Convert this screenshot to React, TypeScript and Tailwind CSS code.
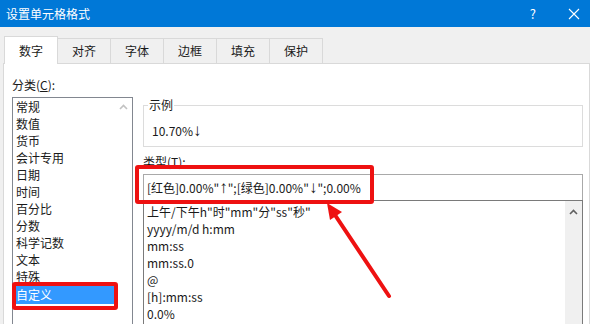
import React from 'react';

const categories = [
  '常规',
  '数值',
  '货币',
  '会计专用',
  '日期',
  '时间',
  '百分比',
  '分数',
  '科学记数',
  '文本',
  '特殊',
  '自定义',
];

const formats = [
  '上午/下午h"时"mm"分"ss"秒"',
  'yyyy/m/d h:mm',
  'mm:ss',
  'mm:ss.0',
  '@',
  '[h]:mm:ss',
  '0.0%',
];

const tabs = ['数字', '对齐', '字体', '边框', '填充', '保护'];

const ChevronUp: React.FC<{className?: string}> = ({className}) => (
  <svg width="9" height="6" viewBox="0 0 9 6" className={className}>
    <path d="M1 5 L4.5 1.5 L8 5" fill="none" stroke="currentColor" strokeWidth="1.6" />
  </svg>
);

// narrow arrow glyph, the CJK font's own arrows are full width
const Arrow: React.FC<{ch: string}> = ({ch}) => (
  <span
    style={{fontFamily: '"Liberation Sans", "DejaVu Sans", sans-serif'}}
    className="text-[17px] leading-[0] inline-block"
  >
    {ch}
  </span>
);

export default function App() {
  return (
    <div
      className="relative w-[590px] h-[324px] overflow-hidden bg-[#f0f0f0] text-[12px] text-[#1a1a1a]"
      style={{fontFamily: '"Noto Sans CJK SC", "Noto Sans", sans-serif'}}
    >
      {/* title bar */}
      <div className="h-[27px] bg-[#0078d7] flex items-center text-white">
        <span className="pl-[6px] text-[12px] leading-none">设置单元格格式</span>
        <span className="ml-auto mr-[32px] text-[13px] leading-none">?</span>
        <svg width="12" height="12" viewBox="0 0 12 12" className="mr-[10px]">
          <path d="M1 1 L11 11 M11 1 L1 11" stroke="white" strokeWidth="1.1" />
        </svg>
      </div>

      <div className="pt-[9px] pl-[3px]">
        {/* tabs */}
        <div className="flex items-end h-[27px] pl-[1px]">
          {tabs.map((t, i) =>
            i === 0 ? (
              <div
                key={t}
                className="relative z-10 h-[28px] -mb-px w-[54px] flex items-center justify-center bg-white border border-b-0 border-[#d9d9d9]"
              >
                {t}
              </div>
            ) : (
              <div
                key={t}
                className="h-[25px] w-[54px] -ml-px flex items-center justify-center bg-[#f0f0f0] border border-b-0 border-[#d9d9d9]"
              >
                {t}
              </div>
            ),
          )}
        </div>

        {/* panel */}
        <div className="w-[587px] h-[300px] bg-white border border-[#d9d9d9] pl-[8px] pr-[6px] pt-[13px] flex gap-[10px]">
          {/* category column */}
          <div className="w-[121px] flex flex-col">
            <div className="leading-[16px]">
              分类(<span className="underline">C</span>):
            </div>
            <div className="mt-[4px] h-[240px] border border-[#828790] flex">
              <div className="flex-1 pl-[2px]">
                {categories.map((c) => (
                  <div
                    key={c}
                    className={
                      c === '自定义'
                        ? 'h-[18px] leading-[18px] pl-[1px] mt-[1px] bg-[#3399ff] text-white'
                        : 'h-[17px] leading-[17px] pl-[1px]'
                    }
                  >
                    {c}
                  </div>
                ))}
              </div>
              <div className="w-[17px] flex justify-center pt-[6px]">
                <ChevronUp className="text-[#c2c2c2]" />
              </div>
            </div>
          </div>

          {/* right column */}
          <div className="flex-1 flex flex-col mt-[28px]">
            <div className="relative h-[42px] border border-[#dcdcdc] pl-[8px] pt-[17px]">
              <span className="absolute -top-[9px] left-[4px] bg-white px-[1px] leading-[16px]">示例</span>
              <div className="leading-[16px]">
                10.70%<Arrow ch="↓" />
              </div>
            </div>

            <div className="mt-[7px] leading-[16px]">
              类型(<span className="underline">T</span>):
            </div>

            <div className="mt-[4px] h-[26px] border border-b-0 border-[#a9a9a9] flex items-center pl-[3px] whitespace-pre">
              [红色]0.00%"<Arrow ch="↑" />";[绿色]0.00%"<Arrow ch="↓" />";0.00%
            </div>

            <div className="h-[140px] border border-[#7a7a7a] flex">
              <div className="flex-1 pl-[3px] pt-[2px]">
                {formats.map((f) => (
                  <div key={f} className="h-[17px] leading-[17px]">
                    {f}
                  </div>
                ))}
              </div>
              <div className="w-[17px] bg-[#f0f0f0] flex justify-center pt-[8px]">
                <ChevronUp className="text-[#606060]" />
              </div>
            </div>
          </div>
        </div>
      </div>

      {/* annotations */}
      <div className="absolute left-[12px] top-[282px] w-[106px] h-[28px] border-[4px] border-[#ee1111] rounded-[3px]" />
      <div className="absolute left-[135px] top-[165px] w-[239px] h-[39px] border-[4px] border-[#ee1111] rounded-[3px]" />
      <svg className="absolute left-0 top-0" width="590" height="324" viewBox="0 0 590 324">
        <line x1="389" y1="296" x2="333" y2="212" stroke="#ee1111" strokeWidth="4" strokeLinecap="round" />
        <polygon points="327,203 342,212 330,220" fill="#ee1111" />
      </svg>
    </div>
  );
}
